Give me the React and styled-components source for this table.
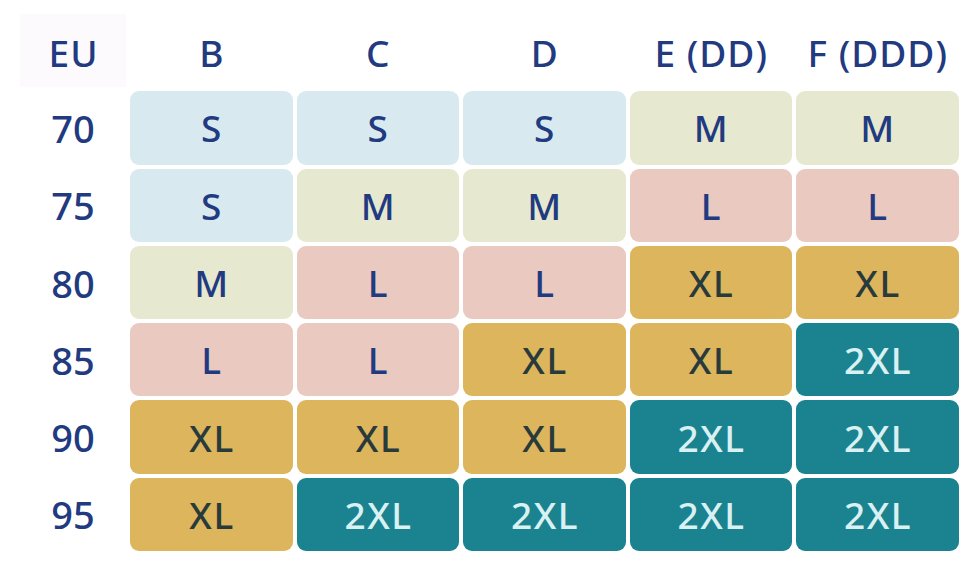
import React from "react";
import styled, { createGlobalStyle } from "styled-components";

const Global = createGlobalStyle`
  html, body { margin: 0; padding: 0; background: #ffffff; }
  body { font-family: "Noto Sans", "Open Sans", sans-serif; }
`;

const palette = {
  S: { bg: "#d8eaf0", fg: "#213a80" },
  M: { bg: "#e6e9d0", fg: "#213a80" },
  L: { bg: "#eac9c0", fg: "#213a80" },
  XL: { bg: "#dcb55d", fg: "#293a3b" },
  "2XL": { bg: "#1b8390", fg: "#d9f1f2" },
};

const Chart = styled.div`
  display: grid;
  grid-template-columns: 106px repeat(5, 162.5px);
  grid-template-rows: repeat(7, 73.3px);
  column-gap: 4px;
  row-gap: 4px;
  padding: 14px 0 0 20px;
`;

const HeadCell = styled.div`
  display: flex;
  align-items: center;
  justify-content: center;
  padding: 4px 0 0 1px;
  font-size: 37px;
  font-weight: 500;
  color: #213a80;
  letter-spacing: 1px;
  background: ${(p) => (p.$corner ? "#fcfafd" : "transparent")};
`;

const RowLabel = styled.div`
  display: flex;
  align-items: center;
  justify-content: center;
  font-size: 38px;
  font-weight: 500;
  color: #213a80;
`;

const SizeCell = styled.div`
  display: flex;
  align-items: center;
  justify-content: center;
  padding-left: 1.5px;
  border-radius: 9px;
  font-size: 37px;
  font-weight: 500;
  letter-spacing: 1.5px;
  background: ${(p) => palette[p.$size].bg};
  color: ${(p) => palette[p.$size].fg};
`;

const cups = ["B", "C", "D", "E (DD)", "F (DDD)"];
const rows = [
  ["70", ["S", "S", "S", "M", "M"]],
  ["75", ["S", "M", "M", "L", "L"]],
  ["80", ["M", "L", "L", "XL", "XL"]],
  ["85", ["L", "L", "XL", "XL", "2XL"]],
  ["90", ["XL", "XL", "XL", "2XL", "2XL"]],
  ["95", ["XL", "2XL", "2XL", "2XL", "2XL"]],
];

export default function App() {
  return (
    <>
      <Global />
      <Chart>
        <HeadCell $corner>EU</HeadCell>
        {cups.map((c) => (
          <HeadCell key={c}>{c}</HeadCell>
        ))}
        {rows.map(([band, sizes]) => (
          <React.Fragment key={band}>
            <RowLabel>{band}</RowLabel>
            {sizes.map((s, i) => (
              <SizeCell key={i} $size={s}>
                {s}
              </SizeCell>
            ))}
          </React.Fragment>
        ))}
      </Chart>
    </>
  );
}
